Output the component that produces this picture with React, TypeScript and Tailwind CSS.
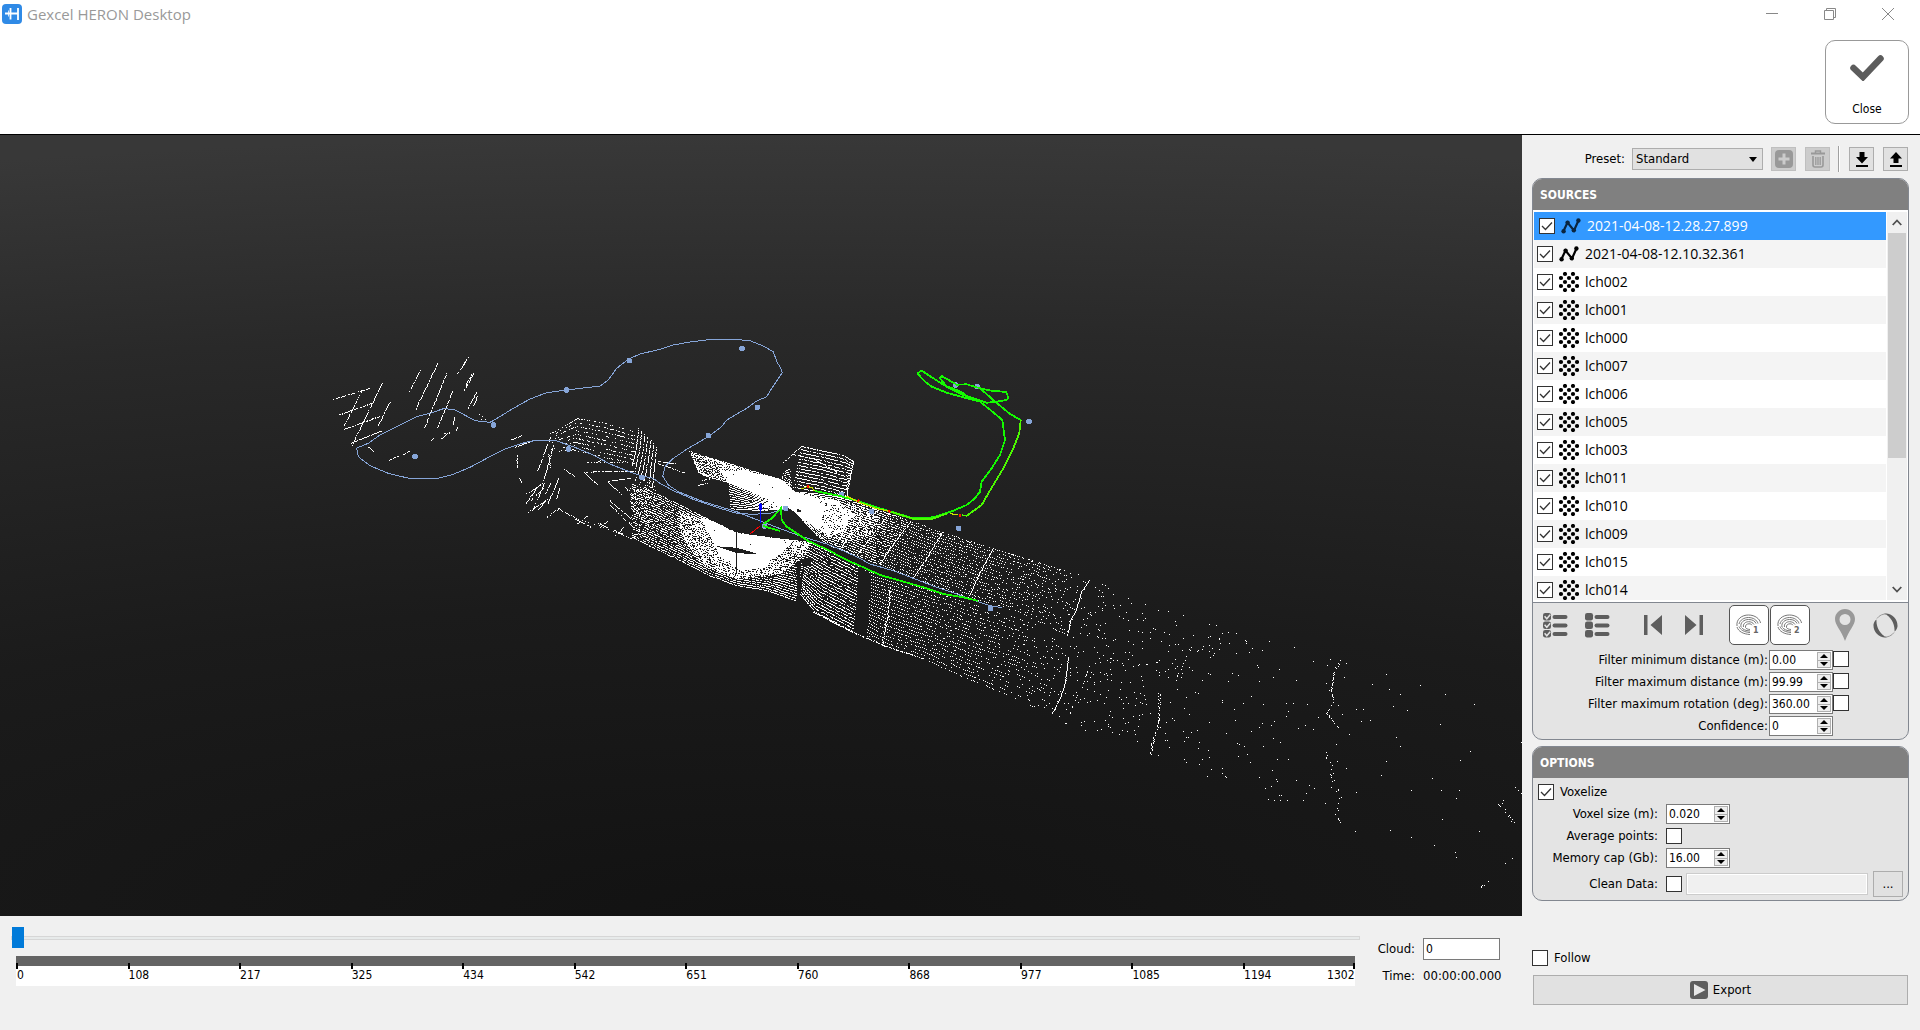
import React, { useId, useMemo, useState } from "react";

type Pt = [number, number];

/* ------------------------------------------------------------------ */
/* Point cloud                                                         */
/* ------------------------------------------------------------------ */

function makeRandom(seed: number) {
  let s = seed;
  return () => {
    s = (s * 1664525 + 1013904223) % 4294967296;
    return s / 4294967296;
  };
}

/** Scan frames are stored at three units per pixel, relative to an origin. */
const frame = (ox: number, oy: number) => (pts: Pt[]): Pt[] =>
  pts.map(([x, y]) => [ox + x / 3, oy + y / 3]);
const west = frame(320, 320);
const mid = frame(680, 340);

function inside(poly: Pt[], x: number, y: number) {
  let hit = false;
  for (let i = 0, j = poly.length - 1; i < poly.length; j = i++) {
    const [xi, yi] = poly[i];
    const [xj, yj] = poly[j];
    if (yi > y !== yj > y && x < ((xj - xi) * (y - yi)) / (yj - yi) + xi) hit = !hit;
  }
  return hit;
}

/** A cross-section of a ribbon: edge A, edge B, density. */
type Section = [number, number, number, number, number];

const HOLES: Pt[][] = [
  mid([[105, 617], [170, 622], [238, 642], [200, 640], [165, 636]]),
  mid([[168, 574], [171, 574], [171, 700], [168, 700]]),
  mid([[360, 655], [390, 652], [391, 676], [366, 676]]),
  mid([[534, 680], [572, 700], [558, 890], [524, 875]]),
  mid([[348, 665], [360, 665], [358, 800], [349, 780]]),
  mid([[350, 506], [362, 508], [360, 516], [350, 514]]),
];

function buildCloud() {
  const rnd = makeRandom(20210408);
  const cells = new Set<number>();
  const put = (x: number, y: number) => {
    const px = Math.round(x);
    const py = Math.round(y);
    if (px < 0 || px > 1521 || py < 135 || py > 915) return;
    if (HOLES.some((h) => inside(h, px, py))) return;
    cells.add(py * 2000 + px);
  };

  const ribbon = (secs: Section[], rows: number, step: number, jitter: number, conv?: (p: Pt[]) => Pt[]) => {
    const s = secs.map(([ax, ay, bx, by, d]) => {
      const [a, b] = conv ? conv([[ax, ay], [bx, by]]) : ([[ax, ay], [bx, by]] as Pt[]);
      return { a, b, d };
    });
    for (let r = 0; r <= rows; r++) {
      const v = r / rows;
      for (let i = 0; i < s.length - 1; i++) {
        const p = s[i];
        const q = s[i + 1];
        const x0 = p.a[0] + (p.b[0] - p.a[0]) * v;
        const y0 = p.a[1] + (p.b[1] - p.a[1]) * v;
        const x1 = q.a[0] + (q.b[0] - q.a[0]) * v;
        const y1 = q.a[1] + (q.b[1] - q.a[1]) * v;
        const n = Math.max(1, Math.round(Math.hypot(x1 - x0, y1 - y0) / step));
        for (let k = 0; k < n; k++) {
          const u = k / n;
          if (rnd() < p.d + (q.d - p.d) * u)
            put(x0 + (x1 - x0) * u + (rnd() - 0.5) * jitter, y0 + (y1 - y0) * u + (rnd() - 0.5) * jitter);
        }
      }
    }
  };

  const line = (pts: Pt[], density: number, jitter = 0.5) => {
    for (let i = 0; i < pts.length - 1; i++) {
      const [x0, y0] = pts[i];
      const [x1, y1] = pts[i + 1];
      const n = Math.max(1, Math.ceil(Math.max(Math.abs(x1 - x0), Math.abs(y1 - y0))));
      for (let k = 0; k <= n; k++)
        if (rnd() < density) put(x0 + ((x1 - x0) * k) / n + (rnd() - 0.5) * jitter, y0 + ((y1 - y0) * k) / n);
    }
  };

  const solid = (poly: Pt[], density: number) => {
    const xs = poly.map((p) => p[0]);
    const ys = poly.map((p) => p[1]);
    for (let y = Math.floor(Math.min(...ys)); y <= Math.max(...ys); y++)
      for (let x = Math.floor(Math.min(...xs)); x <= Math.max(...xs); x++)
        if (inside(poly, x, y) && rnd() < density) put(x, y);
  };

  /* saturated areas beside the scanner */
  solid(mid([[120, 392], [200, 392], [300, 415], [345, 455], [400, 470], [430, 500], [420, 560], [400, 560], [345, 515], [300, 490], [240, 465], [145, 428]]), 0.99);
  solid(mid([[380, 462], [470, 480], [520, 520], [500, 560], [450, 590], [400, 560]]), 0.7);
  solid(mid([[440, 470], [600, 515], [580, 580], [500, 610], [430, 585]]), 0.35);
  solid(mid([[60, 345], [130, 366], [300, 415], [240, 430], [120, 400]]), 0.35);
  solid(mid([[60, 528], [90, 540], [170, 578], [260, 590], [340, 600], [300, 640], [270, 660], [262, 680], [180, 690], [120, 650], [90, 590]]), 0.99);
  solid(mid([[0, 505], [90, 540], [170, 578], [390, 605], [380, 640], [300, 700], [170, 715], [60, 670], [0, 580]]), 0.5);

  /* upper wall, west end */
  ribbon([[28, 333, 50, 385, 0.6], [60, 345, 60, 402, 0.72], [130, 364, 140, 425, 0.85], [230, 396, 240, 465, 0.95], [330, 430, 320, 500, 0.95]], 13, 1, 0.6, mid);
  /* block below the wall */
  ribbon([[145, 425, 152, 505, 0.9], [240, 465, 240, 510, 0.92], [325, 490, 310, 506, 0.95]], 11, 1, 0.2, mid);
  /* box on the wall */
  ribbon([[362, 318, 340, 440, 0.85], [430, 332, 420, 455, 0.85], [490, 346, 500, 478, 0.8], [520, 364, 500, 455, 0.8]], 13, 1, 0.3, mid);
  line(mid([[310, 367], [335, 342], [362, 318]]), 0.8);
  line(mid([[335, 342], [400, 355], [470, 395]]), 0.9);
  line(mid([[520, 364], [512, 400], [500, 455]]), 0.95, 1.5);
  ribbon([[310, 395, 300, 420, 0.6], [330, 385, 335, 445, 0.6]], 7, 1, 0.8, mid);

  /* upper tunnel wall */
  ribbon(
    [
      [345, 455, 345, 515, 0.98],
      [400, 458, 400, 575, 0.92],
      [480, 470, 440, 612, 0.85],
      [580, 505, 490, 630, 0.75],
      [690, 542, 598, 672, 0.6],
    ],
    22, 1, 0.4, mid
  );
  ribbon(
    [
      [690, 542, 598, 672, 0.85],
      [787, 577, 700, 712, 0.75],
      [938, 625, 865, 770, 0.6],
      [1080, 670, 1010, 812, 0.42],
      [1229, 720, 1163, 885, 0.26],
    ],
    18, 2, 0.7, mid
  );
  /* lower wall and floor */
  ribbon(
    [
      [-150, 430, -145, 590, 0.5],
      [-60, 465, -75, 625, 0.7],
      [10, 500, 0, 660, 0.74],
      [90, 540, 80, 702, 0.82],
      [170, 578, 168, 735, 0.84],
      [270, 592, 260, 750, 0.84],
      [385, 605, 347, 782, 0.82],
    ],
    24, 1, 0.4, mid
  );
  ribbon(
    [
      [385, 605, 360, 762, 0.85],
      [450, 635, 405, 815, 0.8],
      [540, 680, 520, 875, 0.75],
    ],
    21, 1, 0.2, mid
  );
  ribbon(
    [
      [550, 690, 550, 880, 0.95],
      [640, 715, 608, 915, 0.85],
      [780, 762, 730, 955, 0.65],
      [900, 800, 850, 1010, 0.5],
      [1060, 850, 990, 1065, 0.32],
      [1164, 930, 1116, 1125, 0.2],
    ],
    20, 2, 0.5, mid
  );
  line(mid([[400, 815], [500, 868], [608, 915], [730, 955]]), 0.8);
  line(mid([[760, 575], [940, 625], [1200, 705]]), 0.3);

  /* far tunnel */
  ribbon(
    [
      [1089, 580, 1052, 715, 0.1],
      [1150, 605, 1100, 735, 0.075],
      [1200, 622, 1150, 752, 0.04],
      [1340, 662, 1240, 788, 0.022],
      [1400, 690, 1345, 822, 0.009],
      [1540, 745, 1470, 860, 0.004],
    ],
    26, 1, 4
  );

  /* cross curves of the tunnel rings */
  line(mid([[480, 625], [580, 505]]), 0.6);
  line(mid([[530, 645], [625, 520]]), 0.8);
  line(mid([[598, 672], [640, 610], [690, 545]]), 1, 1);
  line(mid([[700, 710], [745, 645], [787, 575]]), 1, 1);
  line(mid([[865, 770], [895, 705], [938, 625]]), 0.95);
  line(mid([[630, 740], [622, 830], [605, 915]]), 0.95, 1.5);
  line([[1089, 580], [1081, 592], [1076, 610], [1071, 618], [1067, 635]], 0.95);
  line([[1068, 657], [1065, 682], [1060, 698], [1052, 713]], 0.95);
  line([[1159, 693], [1159, 720], [1155, 733], [1150, 754]], 0.75, 2);
  line([[1340, 660], [1334, 672], [1331, 690], [1333, 702], [1327, 713], [1337, 727]], 0.6, 1.5);
  line([[1324, 751], [1331, 765], [1333, 780], [1341, 797], [1336, 810], [1340, 823]], 0.4, 4);
  line([[1089, 665], [1083, 683]], 0.5);
  line([[1077, 695], [1070, 713]], 0.5);
  line([[1192, 645], [1183, 663], [1176, 680]], 0.3, 2);
  line([[1503, 795], [1500, 804], [1513, 822]], 0.4, 4);
  line([[1487, 881], [1479, 888]], 0.3, 2);
  line([[1505, 863], [1508, 872]], 0.3);
  line([[1222, 772], [1226, 777]], 0.6, 2);
  ([[1279, 795], [1287, 800], [1303, 800], [1355, 831], [1390, 830], [1411, 837], [1434, 845], [1455, 852], [1512, 858], [1441, 790], [1442, 819], [1521, 742], [1521, 793], [1518, 790], [1515, 787], [1470, 751], [1474, 704], [1445, 694], [1386, 674], [1420, 685]] as Pt[]).forEach(([x, y]) => put(x, y));

  /* isolated scan lines at the west end */
  const strokes: [number, number, number, number][] = [
    [40, 237, 148, 204], [58, 283, 160, 247], [72, 326, 178, 288], [93, 368, 182, 332], [72, 315, 125, 210],
    [95, 374, 185, 188], [172, 317, 208, 245], [268, 213, 300, 148], [286, 268, 352, 130], [313, 320, 380, 155],
    [352, 320, 397, 212], [412, 160, 445, 108], [425, 140, 437, 120], [430, 213, 460, 160], [437, 195, 453, 163],
    [443, 263, 470, 212], [460, 255, 472, 225], [398, 312, 403, 290], [360, 358, 385, 335], [368, 340, 386, 340],
    [205, 421, 232, 408], [248, 402, 270, 390], [332, 362, 340, 355], [406, 335, 412, 322], [145, 380, 158, 392],
    [572, 358, 602, 346], [585, 380, 635, 362], [590, 405, 590, 445], [598, 475, 604, 485], [650, 455, 692, 345],
    [670, 480, 700, 375], [635, 575, 672, 490], [618, 550, 650, 500], [683, 550, 715, 475], [708, 535, 718, 505],
    [620, 520, 665, 490], [655, 568, 675, 540], [625, 575, 680, 538], [632, 540, 668, 505], [680, 590, 718, 563],
    [770, 610, 800, 587], [765, 597, 812, 620], [840, 620, 860, 603], [835, 608, 862, 622], [885, 645, 910, 622],
    [882, 630, 905, 640], [930, 655, 955, 640], [733, 448, 762, 467], [793, 457, 832, 493], [862, 483, 902, 522],
    [862, 483, 935, 472], [868, 540, 935, 598], [868, 552, 940, 622], [915, 500, 950, 540], [1015, 423, 1065, 430],
    [1015, 430, 1095, 458], [1135, 495, 1165, 487], [1145, 480, 1168, 475], [1135, 455, 1165, 468],
    [685, 400, 690, 440], [676, 520, 690, 490], [830, 425, 845, 418],
  ];
  strokes.forEach(([a, b, c, d]) => line(west([[a, b], [c, d]]), 0.82));
  line(west([[690, 340], [770, 295]]), 0.4);
  line(west([[718, 567], [770, 595], [850, 620], [935, 655]]), 0.35, 1);
  line(west([[793, 455], [945, 452]]), 0.75);
  line(west([[800, 425], [915, 425]]), 0.5);
  ribbon([[700, 335, 690, 395, 0.15], [770, 295, 760, 388, 0.4], [850, 308, 850, 410, 0.4], [945, 335, 945, 430, 0.45]], 8, 1, 0.3, west);
  for (let i = 0; i < 7; i++)
    line(west([[955 + 9 * i, 325 + 9 * i], [948 + 9 * i, 380 + 9 * i], [936 + 9 * i + (i > 4 ? 6 : 0), 436 + 11 * i]]), 0.85);
  ribbon([[945, 470, 930, 560, 0.3], [1010, 500, 990, 620, 0.5]], 12, 1, 0.4, west);
  ribbon([[480, 270, 470, 320, 0.08], [515, 285, 510, 320, 0.12]], 4, 1, 2, west);

  /* merge horizontal neighbours into runs */
  const keys = [...cells].sort((a, b) => a - b);
  let d = "";
  for (let i = 0; i < keys.length; ) {
    let j = i;
    while (j + 1 < keys.length && keys[j + 1] === keys[j] + 1) j++;
    const w = j - i + 1;
    d += `M${keys[i] % 2000} ${Math.floor(keys[i] / 2000)}h${w}v1h-${w}z`;
    i = j + 1;
  }
  return d;
}

const toPath = (pts: Pt[]) => "M" + pts.map(([x, y]) => `${x.toFixed(1)} ${y.toFixed(1)}`).join("L");

const BLUE_PATHS = [
  toPath(west([[523, 300], [510, 307], [465, 302], [430, 283], [400, 268], [370, 266], [330, 280], [290, 290], [240, 315], [180, 345], [145, 370], [110, 384], [115, 410], [150, 437], [205, 460], [275, 477], [350, 476], [400, 463], [450, 442], [500, 415], [560, 385], [620, 366], [650, 361], [710, 363], [760, 380], [820, 405], [870, 432], [920, 452], [965, 468], [1000, 475], [1020, 490], [1060, 512], [1120, 538], [1200, 565], [1250, 580], [1300, 583], [1350, 580], [1395, 565]])),
  toPath([
    ...west([[523, 300], [575, 268], [630, 237], [680, 218], [740, 210], [840, 198], [865, 180], [890, 145], [925, 118], [960, 102], [1020, 88], [1060, 75], [1110, 66], [1165, 59], [1240, 58], [1290, 62], [1330, 78], [1360, 95], [1372, 128], [1380, 140], [1387, 158], [1355, 205], [1340, 230], [1310, 243], [1280, 265], [1220, 300], [1205, 320], [1165, 350], [1100, 388], [1060, 415], [1035, 440], [1028, 468], [1045, 495], [1075, 515], [1150, 545], [1250, 575], [1300, 595], [1370, 622]]),
    ...mid([[360, 588], [400, 600], [440, 612], [480, 628], [530, 650], [570, 672], [640, 692], [700, 715], [760, 738], [830, 762], [880, 780], [930, 797], [965, 803]]),
  ]),
];

const GREEN_PATHS = [
  toPath(mid([[712, 100], [725, 92], [760, 115], [800, 140], [850, 165], [920, 188], [950, 185], [980, 180], [985, 172], [978, 156], [935, 152], [900, 145], [860, 133], [830, 134], [785, 108], [780, 115], [800, 140], [815, 143], [850, 160], [860, 170], [900, 182]])),
  toPath(mid([[712, 100], [735, 125], [755, 140], [800, 158], [850, 172], [900, 185], [925, 205], [967, 240], [975, 300], [960, 345], [935, 385], [905, 425], [900, 455], [885, 475], [860, 495], [820, 512], [760, 532], [700, 535], [640, 517], [590, 502], [540, 485], [480, 468], [405, 453]])),
  toPath(mid([[900, 145], [940, 180], [990, 222], [1022, 240]])),
  toPath(mid([[250, 552], [275, 535], [303, 505], [305, 540], [320, 560], [385, 603], [440, 628], [500, 660], [550, 682], [600, 705], [660, 722], [730, 742], [790, 762], [850, 772], [895, 783]])),
  toPath(mid([[250, 558], [300, 573]])),
];
const LIME_PATHS = [
  toPath(mid([[1022, 240], [1018, 280], [1000, 325], [970, 385], [925, 460], [905, 495], [860, 527], [845, 526]])),
  toPath(mid([[800, 521], [755, 537], [700, 537], [630, 515]])),
];
const YELLOW_PATHS = [
  toPath(mid([[835, 524], [810, 521]])),
  toPath(mid([[628, 514], [590, 506], [540, 488], [500, 468]])),
  toPath(mid([[365, 447], [380, 440], [395, 442], [403, 452]])),
];
const RED_SPOTS = mid([[384, 440], [535, 482], [628, 514], [840, 526]]);
const STATIONS: Pt[] = [
  ...west([[1266, 85], [928, 122], [740, 210], [1312, 262], [1165, 347], [521, 315], [285, 409], [746, 387], [966, 473]]),
  ...mid([[827, 135], [892, 140], [1047, 244], [836, 565], [931, 806], [485, 463], [575, 514], [317, 505], [254, 558]]),
];

function PointCloudView() {
  const cloud = useMemo(buildCloud, []);
  return (
    <div className="relative min-h-0 flex-1 overflow-hidden bg-[radial-gradient(200%_100%_at_50%_100%,#121212_0%,#1b1b1b_40%,#292929_75%,#383838_100%)]">
      <svg
        className="absolute inset-0 h-full w-full"
        viewBox="0 135 1522 781"
        preserveAspectRatio="xMidYMid slice"
        shapeRendering="crispEdges"
        fill="none"
        role="img"
        aria-label="Point cloud with scanner trajectories"
      >
        <path d={cloud} fill="#ffffff" />
        {BLUE_PATHS.map((d) => (
          <path key={d} d={d} stroke="#86a5d8" strokeWidth="1" />
        ))}
        {STATIONS.map(([x, y]) => (
          <circle key={`${x},${y}`} cx={x} cy={y} r="2.8" fill="#86a5d8" />
        ))}
        {GREEN_PATHS.map((d) => (
          <path key={d} d={d} stroke="#14fa00" strokeWidth="1.8" />
        ))}
        {LIME_PATHS.map((d) => (
          <path key={d} d={d} stroke="#4cfa00" strokeWidth="1.8" />
        ))}
        {YELLOW_PATHS.map((d) => (
          <path key={d} d={d} stroke="#c8e600" strokeWidth="1.2" />
        ))}
        {RED_SPOTS.map(([x, y]) => (
          <circle key={x} cx={x} cy={y} r="1.4" fill="#ff1400" />
        ))}
        <path d="M760 503v20" stroke="#0000ff" />
        <path d="M760 504v6" stroke="#0000ff" strokeWidth="3" />
        <path d="M760 526L750 534" stroke="#ff0000" />
      </svg>
    </div>
  );
}

/* ------------------------------------------------------------------ */
/* Controls                                                            */
/* ------------------------------------------------------------------ */

function CheckBox({ id, label, checked = false }: { id?: string; label?: string; checked?: boolean }) {
  const [on, setOn] = useState(checked);
  return (
    <span className="inline-grid size-4 shrink-0">
      <input
        id={id}
        type="checkbox"
        aria-label={label}
        checked={on}
        onChange={() => setOn(!on)}
        className="peer col-start-1 row-start-1 size-4 appearance-none border border-[#333] bg-white"
      />
      <svg viewBox="0 0 16 16" className="pointer-events-none invisible col-start-1 row-start-1 size-4 peer-checked:visible" fill="none" stroke="#333" strokeWidth="1.3">
        <path d="M3 8l3.5 3.5L13 4.5" />
      </svg>
    </span>
  );
}

function SpinBox({ id, value }: { id: string; value: string }) {
  return (
    <span className="flex h-5 w-16 border border-[#7a7a7a] bg-white p-px text-[12px]">
      <input id={id} defaultValue={value} className="w-0 flex-1 bg-transparent pl-px outline-none" />
      <span className="flex w-3.5 shrink-0 flex-col">
        <button type="button" aria-label="Increase" className="grid flex-1 place-items-center border border-[#b0b0b0] bg-[#eee]">
          <svg width="8" height="4" viewBox="0 0 8 4"><path d="M0 4L4 0l4 4z" /></svg>
        </button>
        <button type="button" aria-label="Decrease" className="grid flex-1 place-items-center border border-t-0 border-[#b0b0b0] bg-[#eee]">
          <svg width="8" height="4" viewBox="0 0 8 4"><path d="M0 0l4 4 4-4z" /></svg>
        </button>
      </span>
    </span>
  );
}

function FilterRow({ label, value, toggle = true }: { label: string; value: string; toggle?: boolean }) {
  const id = useId();
  return (
    <div className="flex items-center justify-end pr-[59px]">
      <label htmlFor={id} className="pr-px">{label}</label>
      <SpinBox id={id} value={value} />
      <span className="w-4 leading-none">{toggle && <CheckBox label={`Enable ${label}`} />}</span>
    </div>
  );
}

const ToolButton = ({ label, disabled, children }: { label: string; disabled?: boolean; children: React.ReactNode }) => (
  <button
    type="button"
    aria-label={label}
    disabled={disabled}
    className="grid h-6 w-[25px] place-items-center border border-[#adadad] bg-[#e1e1e1] disabled:border-[#bfbfbf] disabled:bg-[#ccc]"
  >
    {children}
  </button>
);

function PanelTitle({ children }: { children: React.ReactNode }) {
  return <h2 className="flex h-[31px] items-center bg-[#808080] px-[7px] text-[12px] font-bold text-white">{children}</h2>;
}

/* ------------------------------------------------------------------ */
/* Icons                                                               */
/* ------------------------------------------------------------------ */

const TrajectoryIcon = ({ color }: { color: string }) => (
  <svg width="20" height="16" viewBox="0 0 20 16" fill={color} stroke={color}>
    <path d="M2.5 13L6.5 4.5l6.500 8L17.5 2.5" fill="none" strokeWidth="2.2" />
    <circle cx="2.6" cy="13.2" r="2.2" stroke="none" />
    <circle cx="6.6" cy="4.6" r="2.2" stroke="none" />
    <circle cx="12.8" cy="12.2" r="2.2" stroke="none" />
    <circle cx="17.4" cy="2.5" r="2.2" stroke="none" />
  </svg>
);

const CLOUD_DOTS: Pt[] = [
  [6, 2], [14, 2], [2, 6], [10, 6], [18, 6], [6, 10], [14, 10], [2, 14], [10, 14], [18, 14], [6, 18], [14, 18],
];

const PointsIcon = () => (
  <svg width="20" height="20" viewBox="0 0 20 20">
    {CLOUD_DOTS.map(([x, y]) => (
      <circle key={`${x}-${y}`} cx={x} cy={y} r="2.1" />
    ))}
  </svg>
);

function ListIcon({ ticks }: { ticks?: boolean }) {
  return (
    <svg width="25" height="25" viewBox="0 0 25 25" fill="#5e5e5e">
      {[0, 8.5, 17].map((y) => (
        <g key={y}>
          <rect x="0" y={y} width="8" height="7.5" rx="2.2" />
          <rect x="9.5" y={y + 2} width="15" height="4" rx="2" />
          {ticks && <path d={`M1.6 ${y + 3.2}l2.2 2.6 3.4-4`} fill="none" stroke="#e3e3e3" strokeWidth="1.5" />}
        </g>
      ))}
    </svg>
  );
}

const FingerIcon = ({ n }: { n: number }) => (
  <svg width="26" height="22" viewBox="0 0 26 22" fill="none" stroke="#777" strokeWidth="1">
    <path d="M1 12C0 5 6 1 12.500 1S24 5 24.500 9" />
    <path d="M3 10c1-4 5-6.500 9.500-6.500S21 6 22 9.500" />
    <path d="M5 13c-1-4.500 3-7.500 7.500-7.500 4 0 6.500 1.500 7.500 4" />
    <path d="M7.500 13c-.8-3 2-5.300 5-5.300 2.500 0 4.500 1 5.500 2.800" />
    <path d="M9.500 13.500C9 11 11 9.800 13 9.800c1.500 0 2.500.5 3 1.400" />
    <path d="M1 13c1.500 4.500 6 7 13 7.500M3 12.500c1.500 3.500 5 5.500 11 6M5.500 13.500c1.500 2 4 3.200 8.500 3.500M9.500 13.500c.8 1.200 2 1.800 4.500 2" />
    <text x="17" y="19" fill="#666" stroke="none" fontSize="8" fontWeight="bold" fontFamily="DejaVu Sans, sans-serif">{n}</text>
  </svg>
);

/* ------------------------------------------------------------------ */
/* Page                                                                */
/* ------------------------------------------------------------------ */

const TRAJECTORIES = ["2021-04-08-12.28.27.899", "2021-04-08-12.10.32.361"];
const CLOUDS = ["lch002", "lch001", "lch000", "lch007", "lch006", "lch005", "lch003", "lch011", "lch010", "lch009", "lch015", "lch014"];
const TICKS = [0, 108, 217, 325, 434, 542, 651, 760, 868, 977, 1085, 1194];

function Header() {
  return (
    <header className="border-b border-black bg-white">
      <div className="flex h-7 items-center pl-0.5 font-['Open_Sans',sans-serif] text-[15px] text-[#999]">
        <svg width="20" height="20" viewBox="0 0 20 20">
          <rect width="20" height="20" rx="4" fill="#2f8ae6" />
          <path d="M8.500 4v11.500M16 4v12M3 9.500h13" stroke="#fff" strokeWidth="1.8" fill="none" />
          <path d="M6.500 6.500v6" stroke="#fff" strokeWidth="0.8" />
        </svg>
        <h1 className="pl-[5px]">Gexcel HERON Desktop</h1>
        <div className="ml-auto flex gap-[34px] pr-5">
          <button type="button" aria-label="Minimize" className="grid size-6 place-items-center">
            <svg width="12" height="12" viewBox="0 0 12 12" stroke="#888" fill="none"><path d="M0 5.500h12" /></svg>
          </button>
          <button type="button" aria-label="Restore" className="grid size-6 place-items-center">
            <svg width="12" height="12" viewBox="0 0 12 12" stroke="#888" fill="none"><path d="M.5 2.500h9v9h-9zM2.500 2.500v-2h9v9h-2" /></svg>
          </button>
          <button type="button" aria-label="Close window" className="grid size-6 place-items-center">
            <svg width="12" height="12" viewBox="0 0 12 12" stroke="#888" fill="none"><path d="M0 0l12 12M12 0L0 12" /></svg>
          </button>
        </div>
      </div>
      <div className="flex justify-end pt-3 pr-[11px] pb-2.5">
        <button type="button" className="flex size-[84px] flex-col items-center justify-between rounded-[10px] border border-[#999] bg-white pt-[13px] pb-1.5">
          <svg width="34" height="27" viewBox="0 0 34 27">
            <path d="M3.500 14l9.500 9L30.500 4.500" fill="none" stroke="#5c5c5c" strokeWidth="6.500" strokeLinejoin="miter" strokeLinecap="round" />
          </svg>
          Close
        </button>
      </div>
    </header>
  );
}

function PresetRow() {
  return (
    <div className="flex items-center justify-end pr-px">
      <label htmlFor="preset" className="pr-[7px]">Preset:</label>
      <span className="mr-2 inline-grid items-center">
        <select id="preset" className="col-start-1 row-start-1 h-[22px] w-[131px] appearance-none border border-[#adadad] bg-[#e1e1e1] pl-[3px]">
          <option>Standard</option>
        </select>
        <svg width="8" height="5" viewBox="0 0 8 5" className="pointer-events-none col-start-1 row-start-1 mr-1.5 justify-self-end"><path d="M0 0h8L4 5z" /></svg>
      </span>
      <div className="flex gap-[9px]">
        <ToolButton label="Add preset" disabled>
          <svg width="18" height="18" viewBox="0 0 18 18"><rect width="18" height="18" rx="4" fill="#999" /><path d="M9 3.500v11M3.500 9h11" stroke="#ccc" strokeWidth="3" /></svg>
        </ToolButton>
        <ToolButton label="Delete preset" disabled>
          <svg width="14" height="18" viewBox="0 0 14 18" fill="none" stroke="#999"><path d="M0 3.500h14" strokeWidth="2" /><path d="M4.500 3V1h5v2" strokeWidth="1.400" /><path d="M2 6v9q0 2 2 2h6q2 0 2-2V6" strokeWidth="1.600" /><path d="M4.800 7v8M7 7v8M9.200 7v8" strokeWidth="1.300" /></svg>
        </ToolButton>
      </div>
      <span className="mr-[9px] ml-2 h-[26px] w-0.5 border-l border-[#a0a0a0] bg-white" />
      <div className="flex gap-[9px]">
        <ToolButton label="Import preset">
          <svg width="12" height="15" viewBox="0 0 12 15"><path d="M3.500 0h5v5H12l-6 6.500L0 5h3.500zM0 13h12v2H0z" /></svg>
        </ToolButton>
        <ToolButton label="Export preset">
          <svg width="12" height="15" viewBox="0 0 12 15"><path d="M3.500 11h5V6.500H12L6 0 0 6.500h3.500zM0 13h12v2H0z" /></svg>
        </ToolButton>
      </div>
    </div>
  );
}

function SourceList() {
  return (
    <div className="flex h-[393px] border-b border-[#828790] bg-white px-px pt-0.5 pb-0.5">
      <ul className="min-w-0 flex-1 overflow-hidden font-['Open_Sans',sans-serif] text-[14px]">
        {TRAJECTORIES.map((name, i) => (
          <li key={name} className={i === 0 ? "flex h-7 items-center bg-[#3399ff] pl-[5px] text-white" : "flex h-7 items-center bg-[#f4f4f4] pl-[3px]"}>
            <CheckBox id={`src-${name}`} checked />
            <label htmlFor={`src-${name}`} className="flex items-center gap-1.5 pl-1.5">
              <TrajectoryIcon color={i === 0 ? "#0a2540" : "#000"} />
              {name}
            </label>
          </li>
        ))}
        {CLOUDS.map((name) => (
          <li key={name} className="flex h-7 items-center pl-[3px] even:bg-[#f4f4f4]">
            <CheckBox id={`src-${name}`} checked />
            <label htmlFor={`src-${name}`} className="flex items-center gap-1.5 pl-1.5">
              <PointsIcon />
              {name}
            </label>
          </li>
        ))}
      </ul>
      <div className="ml-px flex w-5 flex-col items-center bg-[#f0f0f0]">
        <button type="button" aria-label="Scroll up" className="grid h-[21px] w-full place-items-center">
          <svg width="10" height="7" viewBox="0 0 10 7" fill="none" stroke="#505050" strokeWidth="1.800"><path d="M.7 6L5 1.500 9.300 6" /></svg>
        </button>
        <div className="flex w-full flex-1 flex-col px-px">
          <div className="basis-[65%] bg-[#cdcdcd]" />
        </div>
        <button type="button" aria-label="Scroll down" className="grid h-[21px] w-full place-items-center">
          <svg width="10" height="7" viewBox="0 0 10 7" fill="none" stroke="#505050" strokeWidth="1.800"><path d="M.7 1L5 5.500 9.300 1" /></svg>
        </button>
      </div>
    </div>
  );
}

function SourceToolbar() {
  return (
    <div className="flex items-center py-0.5 pr-2.5 pl-2.5">
      <div className="mr-auto flex gap-[17px]">
        <button type="button" aria-label="Select all"><ListIcon ticks /></button>
        <button type="button" aria-label="Select none"><ListIcon /></button>
      </div>
      <div className="mr-[26px] flex gap-[23px]">
        <button type="button" aria-label="First cloud">
          <svg width="18" height="20" viewBox="0 0 18 20" fill="#5e5e5e"><path d="M0 0h3.500v20H0zM18 0v20L6.500 10z" /></svg>
        </button>
        <button type="button" aria-label="Last cloud">
          <svg width="18" height="20" viewBox="0 0 18 20" fill="#5e5e5e"><path d="M14.500 0H18v20h-3.500zM0 0v20l11.500-10z" /></svg>
        </button>
      </div>
      <div className="mr-[25px] flex gap-px">
        {[1, 2].map((n) => (
          <button key={n} type="button" aria-label={`Trajectory view ${n}`} className="grid size-10 place-items-center rounded-[5px] border border-[#555] bg-white">
            <FingerIcon n={n} />
          </button>
        ))}
      </div>
      <div className="flex items-center gap-[18px]">
        <button type="button" aria-label="Go to location">
          <svg width="20" height="32" viewBox="0 0 20 32" fill="#999" fillRule="evenodd"><path d="M10 0C4.500 0 0 4.500 0 10c0 6 6 11 10 22 4-11 10-16 10-22 0-5.500-4.500-10-10-10zm0 5a5.500 5.500 0 110 11 5.500 5.500 0 010-11z" /></svg>
        </button>
        <button type="button" aria-label="Refresh">
          <svg width="25" height="25" viewBox="0 0 25 25" fill="#5e5e5e">
            <path d="M14 24.500C6 25.500 0 19 .5 11.500 1 9 2 7.500 3.500 6.500 3 14 7 21.500 14 24.500zM11 .5C19 -.5 25 6 24.500 13.500 24 16 23 17.500 21.500 18.500 22 11 18 3.500 11 .5z" />
            <path d="M4 5.500A11.500 11.500 0 0114 1M21 19.500A11.500 11.500 0 0111 24" fill="none" stroke="#999" strokeWidth="1" />
          </svg>
        </button>
      </div>
    </div>
  );
}

function OptionsPanel() {
  return (
    <section className="mt-1.5 overflow-hidden rounded-[10px] border border-[#828790] bg-[#e4e4e4] text-[13px]">
      <PanelTitle>OPTIONS</PanelTitle>
      <div className="flex items-center gap-1.5 pt-1.5 pl-[5px]">
        <CheckBox id="voxelize" checked />
        <label htmlFor="voxelize">Voxelize</label>
      </div>
      <div className="grid grid-cols-[125px_1fr] items-center gap-x-2 gap-y-0.5 pt-1 pr-[5px] pb-[3px]">
        <label htmlFor="voxel" className="text-right">Voxel size (m):</label>
        <SpinBox id="voxel" value="0.020" />
        <label htmlFor="average" className="text-right">Average points:</label>
        <span className="flex h-5 items-center"><CheckBox id="average" /></span>
        <label htmlFor="memory" className="text-right">Memory cap (Gb):</label>
        <SpinBox id="memory" value="16.00" />
        <label htmlFor="clean" className="text-right">Clean Data:</label>
        <div className="flex items-center pt-px">
          <CheckBox id="clean" />
          <input aria-label="Clean data path" disabled className="mr-[5px] ml-1 h-[22px] w-0 flex-1 border border-[#ccc] bg-[#f0f0f0] inset-ring inset-ring-white" />
          <button type="button" aria-label="Browse" className="h-[26px] w-[30px] border border-[#adadad] bg-[#e1e1e1]">...</button>
        </div>
      </div>
    </section>
  );
}

function Timeline() {
  return (
    <div className="flex h-[114px] gap-[18px] pt-[11px] pr-[22px] pl-[11px]">
      <div className="min-w-0 flex-1">
        <input
          type="range"
          aria-label="Cloud position"
          min={0}
          max={1302}
          defaultValue={0}
          className="block h-[21px] w-full appearance-none bg-transparent [&::-webkit-slider-runnable-track]:h-1 [&::-webkit-slider-runnable-track]:border [&::-webkit-slider-runnable-track]:border-[#d6d6d6] [&::-webkit-slider-runnable-track]:bg-[#e7eaea] [&::-webkit-slider-thumb]:-mt-[10px] [&::-webkit-slider-thumb]:h-[21px] [&::-webkit-slider-thumb]:w-3 [&::-webkit-slider-thumb]:appearance-none [&::-webkit-slider-thumb]:bg-[#007ad9]"
        />
        <div className="mx-[5px] mt-2 h-[30px] bg-[linear-gradient(#646464_10px,#fff_10px)]">
          <div className="flex h-full pt-[7px]">
            {TICKS.map((t) => (
              <div key={t} className="flex w-0 flex-1 justify-between">
                <div>
                  <div className="h-1.5 w-0.5 bg-black" />
                  <div className="pl-px leading-3">{t}</div>
                </div>
                {t === 1194 && (
                  <div className="flex flex-col items-end">
                    <div className="h-1.5 w-0.5 bg-black" />
                    <div className="leading-3">1302</div>
                  </div>
                )}
              </div>
            ))}
          </div>
        </div>
      </div>
      <div className="grid grid-cols-[auto_77px] content-start items-center gap-x-2 gap-y-2 pt-[11px]">
        <label htmlFor="cloud" className="text-right text-[13px]">Cloud:</label>
        <input id="cloud" defaultValue="0" className="h-[22px] w-full border border-[#7a7a7a] bg-white pl-0.5" />
        <span className="text-right text-[13px]">Time:</span>
        <output className="text-[13px] whitespace-nowrap">00:00:00.000</output>
      </div>
    </div>
  );
}

export default function App() {
  return (
    <div className="flex h-screen flex-col bg-[#f0f0f0] font-['DejaVu_Sans_Condensed','DejaVu_Sans',sans-serif] text-[12px] leading-4 text-black">
      <Header />
      <main className="flex min-h-0 flex-1">
        <div className="flex min-w-0 flex-1 flex-col">
          <PointCloudView />
          <Timeline />
        </div>
        <aside className="flex w-[398px] shrink-0 flex-col pt-[11px] pr-[11px] pl-2.5 text-[13px]">
          <PresetRow />
          <section className="mt-1.5 overflow-hidden rounded-[10px] border border-[#828790] bg-[#e4e4e4]">
            <PanelTitle>SOURCES</PanelTitle>
            <SourceList />
            <SourceToolbar />
            <div className="flex flex-col gap-0.5 pt-[3px] pb-[3px]">
              <FilterRow label="Filter minimum distance (m):" value="0.00" />
              <FilterRow label="Filter maximum distance (m):" value="99.99" />
              <FilterRow label="Filter maximum rotation (deg):" value="360.00" />
              <FilterRow label="Confidence:" value="0" toggle={false} />
            </div>
          </section>
          <OptionsPanel />
          <div className="mt-auto flex items-center gap-1.5">
            <CheckBox id="follow" />
            <label htmlFor="follow">Follow</label>
          </div>
          <button type="button" className="mx-px mt-[9px] mb-[25px] flex h-[30px] items-center justify-center gap-[5px] border border-[#adadad] bg-[#e1e1e1]">
            <svg width="18" height="18" viewBox="0 0 18 18"><rect width="18" height="18" rx="3" fill="#5e5e5e" /><path d="M4 3l11.500 6L4 15z" fill="#e8e8e8" /></svg>
            Export
          </button>
        </aside>
      </main>
    </div>
  );
}
